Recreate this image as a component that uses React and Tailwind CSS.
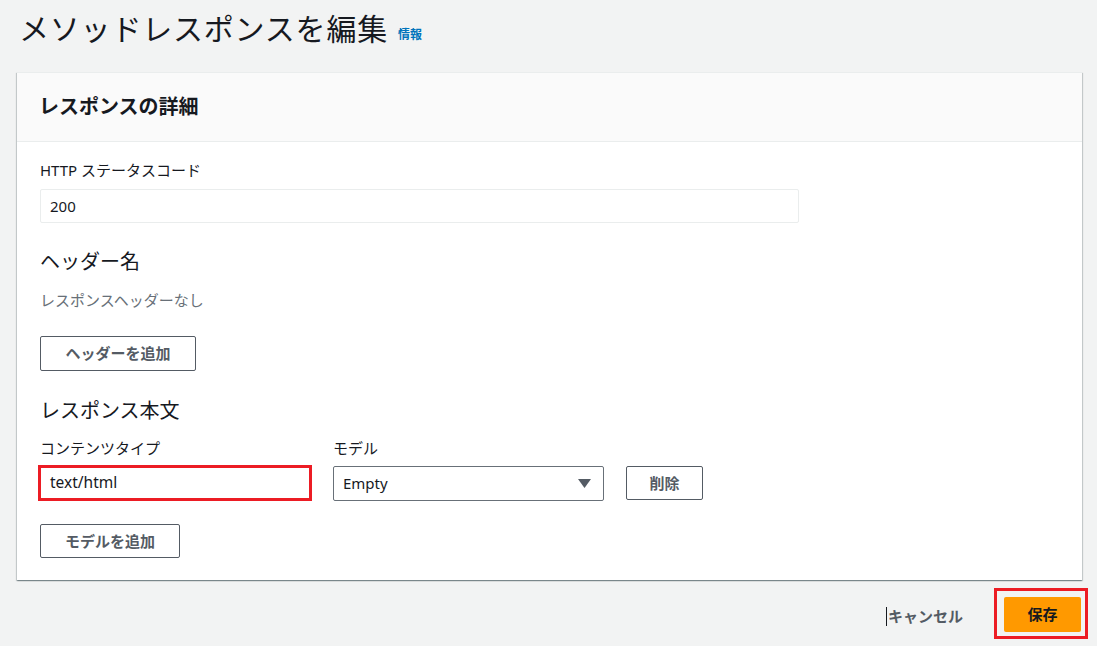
export default function App() {
  const font = { fontFamily: '"Noto Sans", "Noto Sans CJK JP", sans-serif' };
  return (
    <div className="w-[1097px] h-[646px] bg-[#f2f3f3] text-[#16191f] overflow-hidden" style={font}>
      <div className="flex items-end pl-[19px] pt-[8px] h-[72px] pb-[24px]">
        <h1 className="text-[30px] leading-[38px] font-normal tracking-[0.8px] text-[#16191f]">メソッドレスポンスを編集</h1>
        <a className="ml-[10px] mb-[4px] text-[12px] leading-[18px] font-bold text-[#0073bb]">情報</a>
      </div>
      <div className="ml-[17px] w-[1065px] bg-white border-t border-[#eaeded] shadow-[0_1px_1px_0_rgba(0,28,36,0.3),1px_1px_1px_0_rgba(0,28,36,0.15),-1px_1px_1px_0_rgba(0,28,36,0.15)]">
        <div className="h-[69px] bg-[#fafafa] border-b border-[#eaeded] flex items-center px-[22px]">
          <h2 className="text-[20px] leading-[28px] font-bold">レスポンスの詳細</h2>
        </div>
        <div className="pl-[23px] pr-[23px] pt-[17px] pb-[22px]">
          <div className="text-[15px] leading-[22px] mb-[8px]">HTTP ステータスコード</div>
          <div className="w-[759px] h-[34px] border border-[#eaeded] rounded-[2px] flex items-center pl-[9px] text-[15px]">200</div>
          <div className="mt-[25px] text-[20px] leading-[28px]">ヘッダー名</div>
          <div className="mt-[13px] text-[15px] leading-[22px] text-[#687078]">レスポンスヘッダーなし</div>
          <button className="mt-[25px] w-[156px] h-[35px] border border-[#545b64] rounded-[2px] text-[15px] font-bold text-[#545b64] flex items-center justify-center">ヘッダーを追加</button>
          <div className="mt-[26px] text-[20px] leading-[28px]">レスポンス本文</div>
          <div className="mt-[12px] flex">
            <div className="w-[272px]">
              <div className="text-[15px] leading-[22px]">コンテンツタイプ</div>
              <div className="mt-[6px] -ml-[2px] w-[274px] h-[36px] border-[3px] border-[#ec1c24] flex items-center pl-[9px] text-[15.5px] text-[#16191f]">text/html</div>
            </div>
            <div className="ml-[21px] w-[271px]">
              <div className="text-[15px] leading-[22px]">モデル</div>
              <div className="mt-[7px] w-[271px] h-[35px] border border-[#687078] rounded-[2px] flex items-center justify-between pl-[9px] pr-[12px] text-[15px]">
                <span>Empty</span>
                <svg width="13" height="9" viewBox="0 0 13 9"><path d="M0 0 H13 L6.5 9 Z" fill="#545b64" /></svg>
              </div>
            </div>
            <div className="ml-[22px] pt-[29px]">
              <button className="w-[77px] h-[34px] border border-[#545b64] rounded-[2px] text-[15px] font-bold text-[#545b64] flex items-center justify-center">削除</button>
            </div>
          </div>
          <button className="mt-[23px] w-[140px] h-[34px] border border-[#545b64] rounded-[2px] text-[15px] font-bold text-[#545b64] flex items-center justify-center">モデルを追加</button>
        </div>
      </div>
      <div className="mt-[8px] flex justify-end items-center pr-[9px]">
        <div className="flex items-center mr-[31px] mt-[6px]">
          <span className="w-px h-[19px] bg-[#16191f] mr-[1px]"></span>
          <span className="text-[15px] font-bold text-[#545b64]">キャンセル</span>
        </div>
        <div className="border-[3px] border-[#ec1c24] pl-[7px] pr-[4px] pt-[6px] pb-[4px]">
          <button className="w-[77px] h-[35px] bg-[#ff9900] rounded-[2px] text-[15px] font-bold text-[#16191f] flex items-center justify-center">保存</button>
        </div>
      </div>
    </div>
  );
}
